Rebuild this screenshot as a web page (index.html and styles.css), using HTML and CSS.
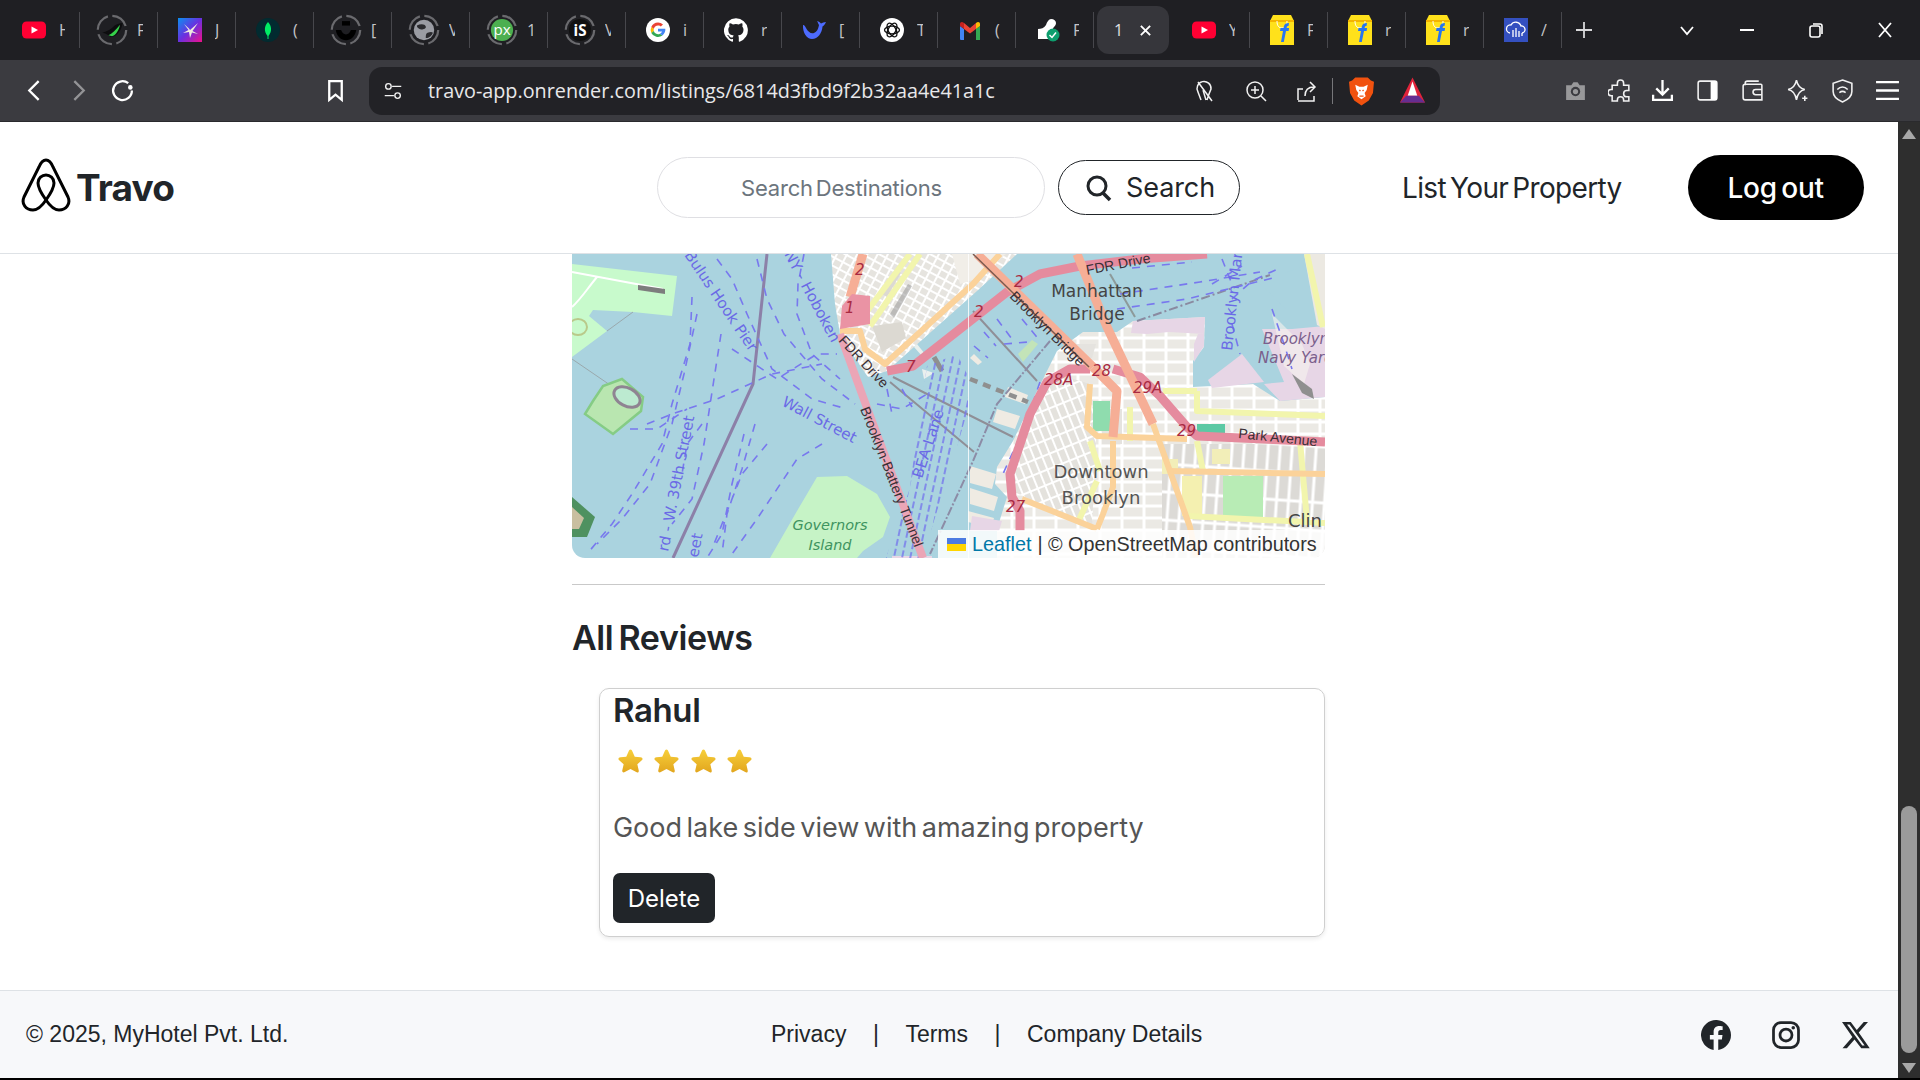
FILE: index.html
```html
<!DOCTYPE html>
<html lang="en">
<head>
  <meta charset="UTF-8">
  <title>Travo</title>
  <link rel="stylesheet" href="styles.css">
</head>
<body>

<svg class="defs" width="0" height="0">
  <defs>
    <symbol id="yt" viewBox="0 0 24 24"><rect x="0" y="3.500" width="24" height="17" rx="4.500" fill="#ff0033"/><path d="M9.500 8.500l6.500 3.500-6.500 3.500z" fill="#fff"/></symbol>
    <symbol id="fk" viewBox="0 0 24 30"><path d="M3 0h18l3 6v24H0V6z" fill="#ffe11b"/><path d="M0 5h24v2H0z" fill="#f4b400"/><path d="M7 6c0 5 2 7 5 7s5-2 5-7" fill="none" stroke="#fff" stroke-width="1"/><path d="M11 27l2-11h-3l.5-3h3l.5-2c.5-2 2-3 5-3l-.5 3c-1 0-1.500.4-1.700 1l-.2 1h2.500l-.5 3h-2.600l-2.200 11z" fill="#2874f0"/></symbol>
    <symbol id="ring" viewBox="0 0 36 36"><circle cx="18" cy="18" r="16" fill="none" stroke="#6a6a6e" stroke-width="2.500" stroke-dasharray="20 5.100"/></symbol>
    <linearGradient id="starfill" x1="0" y1="0" x2="0" y2="1"><stop offset="0" stop-color="#f7cf3a"/><stop offset="1" stop-color="#e2a61e"/></linearGradient>
    <symbol id="star" viewBox="0 0 28 28"><path d="M14 1.500c1 0 1.500.8 2 2l2.400 5.600 6.100.6c2 .2 2.600 1.800 1.200 3.100l-4.600 4.100 1.400 6.200c.4 1.900-1 2.800-2.600 1.900L14 21.800 8.100 25c-1.600.9-3-.100-2.600-1.900l1.400-6.200-4.600-4.100c-1.400-1.300-.8-2.900 1.200-3.100l6.100-.6L12 3.500c.5-1.200 1-2 2-2z" fill="url(#starfill)"/></symbol>
  </defs>
</svg>

<div class="page">

  <div class="tabs">
    <div class="tab"><svg class="fav" viewBox="0 0 24 24"><use href="#yt"/></svg><span>H</span></div>
    <div class="tab"><svg class="fav ringed" viewBox="0 0 36 36"><use href="#ring"/><path d="M7 21c6-1 10-4 14-8 3-2 6-3 9-3-1 7-6 15-13 16-2-2-5-4-10-5z" fill="#0d0d0f"/><path d="M14 24c4-2 8-6 13-12-1 6-5 12-9 13z" fill="#35d04a"/></svg><span>F</span></div>
    <div class="tab"><svg class="fav" viewBox="0 0 24 24"><defs><linearGradient id="gj" x1="0" y1="0" x2="1" y2="1"><stop offset="0" stop-color="#0a90f0"/><stop offset=".5" stop-color="#6a30e0"/><stop offset="1" stop-color="#f0108a"/></linearGradient></defs><rect width="24" height="24" fill="url(#gj)"/><path d="M12 12L20 5l-5.500 8 5.500 3-6-1.500-2 5.500-1-6-6 1 5.500-3L6 6l5 4.500z" fill="#efeadf"/></svg><span>J</span></div>
    <div class="tab"><svg class="fav" viewBox="0 0 24 24"><circle cx="12" cy="12" r="12" fill="#022b30"/><path d="M12 4c3.500 3.500 4.500 9 .5 14v3h-1v-3c-4-5-3-10.500.5-14z" fill="#00ed64"/></svg><span>(</span></div>
    <div class="tab"><svg class="fav ringed" viewBox="0 0 36 36"><use href="#ring"/><rect x="13.500" y="8" width="9" height="5" fill="#000"/><path d="M6.500 18h6c1 3 3 5 5.500 5s4.500-2 5.500-5h6c-1 7-6 11.500-11.500 11.500S7.500 25 6.500 18z" fill="#000"/></svg><span>[</span></div>
    <div class="tab"><svg class="fav ringed" viewBox="0 0 36 36"><use href="#ring"/><circle cx="18" cy="18" r="11.500" fill="#9a9ca3"/><path d="M10 13c4-2 9-2 10 1s-5 4-7 3-3-2-3-4zM22 21c3-1 5-1 6 0-1 3-4 6-8 6 0-3 0-5 2-6z" fill="#2b2b2f"/></svg><span>V</span></div>
    <div class="tab"><svg class="fav ringed" viewBox="0 0 36 36"><use href="#ring"/><circle cx="18" cy="18" r="12.500" fill="#4caf50"/><text class="favtext" x="18" y="24" text-anchor="middle" font-size="17" fill="#fff">px</text></svg><span>1</span></div>
    <div class="tab"><svg class="fav ringed" viewBox="0 0 36 36"><use href="#ring"/><circle cx="18" cy="18" r="12.500" fill="#111"/><text class="favtext" x="18" y="24.500" text-anchor="middle" font-size="17" font-weight="700" fill="#fff">iS</text></svg><span>V</span></div>
    <div class="tab"><svg class="fav" viewBox="0 0 24 24"><circle cx="12" cy="12" r="12" fill="#fff"/><path d="M12 4.500a7.500 7.500 0 0 1 5 1.900l-2.200 2.100A4.300 4.300 0 0 0 7.800 11L5.300 9A7.500 7.500 0 0 1 12 4.500z" fill="#ea4335"/><path d="M5.300 9l2.500 2a4.300 4.300 0 0 0 0 2l-2.500 2a7.500 7.500 0 0 1 0-6z" fill="#fbbc05"/><path d="M5.300 15l2.500-2a4.300 4.300 0 0 0 6.200 2.700l2.400 1.900A7.500 7.500 0 0 1 5.300 15z" fill="#34a853"/><path d="M19.300 10.800H12v2.700h4.100a3.500 3.500 0 0 1-2.100 2.200l2.400 1.900c2.200-2 3.300-4.500 2.900-6.800z" fill="#4285f4"/></svg><span>i</span></div>
    <div class="tab"><svg class="fav" viewBox="0 0 24 24"><path fill="#fff" d="M12 .3a12 12 0 0 0-3.800 23.400c.6.100.8-.3.8-.6v-2c-3.300.7-4-1.600-4-1.600-.600-1.400-1.400-1.800-1.400-1.800-1-.7.100-.7.100-.7 1.200.1 1.800 1.200 1.800 1.200 1 1.800 2.800 1.300 3.500 1 .1-.8.400-1.300.8-1.600-2.700-.3-5.500-1.300-5.500-6 0-1.200.5-2.300 1.200-3.100-.1-.3-.5-1.500.1-3.200 0 0 1-.3 3.300 1.200a11.500 11.500 0 0 1 6 0c2.300-1.500 3.300-1.200 3.300-1.200.6 1.700.2 2.900.1 3.200.8.800 1.200 1.900 1.200 3.100 0 4.600-2.800 5.700-5.500 6 .4.400.8 1.100.8 2.200v3.300c0 .3.200.7.800.6A12 12 0 0 0 12 .3z"/></svg><span>r</span></div>
    <div class="tab"><svg class="fav" viewBox="0 0 24 24"><path fill="#4d6bfe" d="M1 7c1-.3 2 1 3 3 2 4 5 6 8 5 2.500-1 4-3 5-8-1-1-1-3-2-4 2 .5 3 1.500 4 2.500 1.500-.5 3-1.500 5-1.500-1 2-2 3.500-3.500 4.500C20 15 16 21 10 21 5 21 .5 15 1 7z"/><circle cx="8" cy="10" r="1.200" fill="#1f1f23"/></svg><span>[</span></div>
    <div class="tab"><svg class="fav" viewBox="0 0 24 24"><circle cx="12" cy="12" r="12" fill="#fff"/><g fill="none" stroke="#111" stroke-width="1.300"><ellipse cx="12" cy="12" rx="7.500" ry="3.800"/><ellipse cx="12" cy="12" rx="7.500" ry="3.800" transform="rotate(60 12 12)"/><ellipse cx="12" cy="12" rx="7.500" ry="3.800" transform="rotate(120 12 12)"/></g></svg><span>T</span></div>
    <div class="tab"><svg class="fav" viewBox="0 0 24 20"><path d="M2 20V6l4 3v11H3a1 1 0 0 1-1-1z" fill="#4285f4"/><path d="M18 20V9l4-3v14z" fill="#34a853"/><path d="M6 9V3l6 5 6-5v6l-6 4.500z" fill="#ea4335"/><path d="M2 6V4c0-2 2-3 4-1v6z" fill="#c5221f"/><path d="M18 3c2-2 4-1 4 1v2l-4 3z" fill="#fbbc05"/></svg><span>(</span></div>
    <div class="tab"><svg class="fav" viewBox="0 0 24 24"><path d="M15 1c3 0 5 2 5 4 0 3-3 4-3 6v2c-3 0-3 4-1 8H2V11c3 0 6-1 8-4 1-3 3-6 5-6z" fill="#fff"/><circle cx="17" cy="17" r="6.500" fill="#0e9e6e"/><path d="M13.500 17l2.500 2.500 4-5" fill="none" stroke="#fff" stroke-width="1.500"/></svg><span>F</span></div>
    <div class="tab active"><span class="activename">1</span><svg class="closex" viewBox="0 0 14 14"><path d="M2 2l10 10M12 2L2 12" stroke="#fff" stroke-width="2"/></svg></div>
    <div class="tab"><svg class="fav" viewBox="0 0 24 24"><use href="#yt"/></svg><span>Y</span></div>
    <div class="tab"><svg class="fav tall" viewBox="0 0 24 30"><use href="#fk"/></svg><span>F</span></div>
    <div class="tab"><svg class="fav tall" viewBox="0 0 24 30"><use href="#fk"/></svg><span>r</span></div>
    <div class="tab"><svg class="fav tall" viewBox="0 0 24 30"><use href="#fk"/></svg><span>r</span></div>
    <div class="tab"><svg class="fav" viewBox="0 0 24 24"><rect width="24" height="24" fill="#3450c0"/><path d="M6 15a4 4 0 0 1 1-8 5.500 5.500 0 0 1 10 1 3.500 3.500 0 0 1 1 7" fill="none" stroke="#fff" stroke-width="1.300"/><path d="M9 12v7M12 10v9M15 13v6M18 15v3" stroke="#fff" stroke-width="1.300"/></svg><span>/</span></div>
    <svg class="newtab" viewBox="0 0 18 18"><path d="M9 1v16M1 9h16" stroke="#d8d8da" stroke-width="1.800"/></svg>
    <div class="wincontrols">
      <svg viewBox="0 0 16 16"><path d="M2 5l6 7 6-7" fill="none" stroke="#fff" stroke-width="1.800"/></svg>
      <svg class="win-min" viewBox="0 0 16 16"><path d="M1 8h14" stroke="#fff" stroke-width="2"/></svg>
      <svg viewBox="0 0 16 16"><rect x="2" y="4" width="10" height="11" rx="2" fill="none" stroke="#fff" stroke-width="1.600"/><path d="M5 2h7a2 2 0 0 1 2 2v8" fill="none" stroke="#fff" stroke-width="1.600"/></svg>
      <svg viewBox="0 0 16 16"><path d="M2 1l12 14M14 1L2 15" stroke="#fff" stroke-width="1.800"/></svg>
    </div>
  </div>

  <div class="toolbar">
    <div class="tool nav"><svg viewBox="0 0 24 24"><path d="M16 3L7 12l9 9" class="ln"/></svg></div>
    <div class="tool nav dim"><svg viewBox="0 0 24 24"><path d="M8 3l9 9-9 9" class="ln"/></svg></div>
    <div class="tool nav"><svg viewBox="0 0 24 24"><path d="M17.500 5A9 9 0 1 0 21 12" class="ln"/><circle cx="19.500" cy="9" r="2.200" fill="#fff"/></svg></div>
    <div class="tool bookmark"><svg viewBox="0 0 24 24"><path d="M6 3h12v18l-6-5-6 5z" class="ln"/></svg></div>
    <div class="urlbar">
      <svg class="urlicon" viewBox="0 0 24 24"><circle cx="7" cy="7" r="3" class="thin"/><path d="M11 7h10M3 17h10" class="thin"/><circle cx="17" cy="17" r="3" class="thin"/></svg>
      <div class="url">travo-app.onrender.com/listings/6814d3fbd9f2b32aa4e41a1c</div>
      <svg class="urlicon big" viewBox="0 0 24 24"><path d="M8 21l-3-8a7 7 0 1 1 13-3l-2 5-2 6M5 3l14 19M10 11l3 10" class="thin"/></svg>
      <svg class="urlicon big" viewBox="0 0 24 24"><circle cx="11" cy="11" r="8" class="thin"/><path d="M17 17l5 5M11 7v8M7 11h8" class="thin"/></svg>
      <svg class="urlicon big" viewBox="0 0 24 24"><path d="M3 21V10h5M3 22h16v-5M10 17c0-6 3-9 9-9M15 3l5 5-5 5" class="thin"/></svg>
      <i class="urlsep"></i>
      <svg class="brandicon" viewBox="0 0 24 28"><path d="M6 1h12l3 3 3 1-1 11-4 7-7 5-7-5-4-7L0 5l3-1z" fill="#f1520f"/><path d="M6 8l4 2h4l4-2-1 5-2 3 1 3-4 3-4-3 1-3-2-3z" fill="#fff"/><path d="M10 13l1 1M14 13l-1 1M10 19h4" stroke="#f1520f" stroke-width="1.200"/></svg>
      <svg class="brandicon bat" viewBox="0 0 26 28"><path d="M13 0l13 26H0z" fill="#e2233a"/><path d="M13 4l5 15H8z" fill="#fff"/><path d="M0 26l6.500-7h13l6.500 7z" fill="#662d91"/></svg>
    </div>
    <div class="tool camera"><svg viewBox="0 0 24 24"><path d="M3 7h5l2-3h4l2 3h5v14H3z" fill="#98989a"/><circle cx="12" cy="13" r="4.500" fill="#3b3b40"/><circle cx="12" cy="13" r="2.500" fill="#98989a"/></svg></div>
    <div class="tool"><svg viewBox="0 0 24 24"><path d="M9 7V5a3 3 0 0 1 6 0v2h5v5h-2a3 3 0 0 0 0 6h2v4h-5v-1a3 3 0 0 0-6 0v1H4v-5H3a3 3 0 0 1 0-6h1V7z" class="thin"/></svg></div>
    <div class="tool download"><svg viewBox="0 0 24 24"><path d="M12 2v14M6 10l6 6 6-6" class="ln"/><path d="M3 16v5h18v-5" class="ln"/></svg></div>
    <div class="tool"><svg viewBox="0 0 24 24"><rect x="3" y="3" width="18" height="18" rx="2" class="thin"/><path d="M15 3h6v18h-6z" fill="#fff"/></svg></div>
    <div class="tool"><svg viewBox="0 0 24 24"><path d="M5 7V5a2 2 0 0 1 2-2h11M3 8a2 2 0 0 1 2-2h15a1 1 0 0 1 1 1v14H5a2 2 0 0 1-2-2z" class="thin"/><path d="M21 11h-6a2 2 0 0 0 0 5h6" class="thin"/></svg></div>
    <div class="tool"><svg viewBox="0 0 24 24"><path d="M11 2c1 5 3 8 8 9-5 1-7 4-8 10-1-6-3-9-8-10 5-1 7-4 8-9z" class="thin"/><path d="M19 17v5M16.500 19.500h5" class="thin"/></svg></div>
    <div class="tool"><svg viewBox="0 0 24 24"><path d="M12 2l9 3v8c0 5-4 8-9 10-5-2-9-5-9-10V5z" class="thin"/><path d="M7 11c3-3 7-3 10 0M9 14c2-1.500 4-1.500 6 0M12 17h.1" class="thin"/></svg></div>
    <div class="tool"><svg viewBox="0 0 24 24"><path d="M1 4h22M1 12h22M1 20h22" class="ln"/></svg></div>
  </div>

  <div class="viewport">
    <div class="site">
      <nav class="navbar">
        <a class="brand">
          <svg class="logo" viewBox="0 0 50 54"><path d="M25 2c-3 0-5 2-7 7L3 39c-3 7 2 13 9 13 5 0 9-4 13-10 4 6 8 10 13 10 7 0 12-6 9-13L32 9c-2-5-4-7-7-7z" fill="none" stroke="#000" stroke-width="3"/><path d="M25 42c-5-7-8-12-8-17 0-5 4-8 8-8s8 3 8 8c0 5-3 10-8 17z" fill="none" stroke="#000" stroke-width="3"/></svg>
          <span class="brandname">Travo</span>
        </a>
        <form class="searchform">
          <div class="searchinput">Search Destinations</div>
          <div class="searchbtn">
            <svg viewBox="0 0 28 28"><circle cx="12" cy="12" r="9" fill="none" stroke="#212529" stroke-width="3"/><path d="M18 19l7 7" stroke="#212529" stroke-width="3.500"/></svg>
            Search
          </div>
        </form>
        <a class="listprop">List Your Property</a>
        <a class="logout">Log out</a>
      </nav>

      <main class="content">
        <div class="map">
          <svg class="mapsvg" viewBox="0 0 753 304" width="753" height="304">
            <defs>
              <pattern id="blocks" width="9" height="8" patternUnits="userSpaceOnUse" patternTransform="rotate(28)"><rect width="9" height="8" fill="#fff"/><rect x="1" y="1" width="7" height="6" fill="#e6e4df"/></pattern>
              <pattern id="blocks2" width="8" height="14" patternUnits="userSpaceOnUse" patternTransform="rotate(-22)"><rect width="8" height="14" fill="#fff"/><rect x="1" y="1" width="6" height="12" fill="#e4e2dd"/></pattern>
              <pattern id="blocks3" width="22" height="12" patternUnits="userSpaceOnUse"><rect width="22" height="12" fill="#fff"/><rect x="1.500" y="1.500" width="19" height="9" fill="#ebe9e4"/></pattern>
              <pattern id="blocks4" width="12" height="28" patternUnits="userSpaceOnUse" patternTransform="rotate(4)"><rect width="12" height="28" fill="#fff"/><rect x="1.500" y="1.500" width="9" height="25" fill="#dcdad6"/></pattern>
              <pattern id="hatch" width="8" height="10" patternUnits="userSpaceOnUse" patternTransform="rotate(12)"><path d="M2 1v7" stroke="#7474ec" stroke-width="1.500"/></pattern>
              <filter id="soft"><feGaussianBlur stdDeviation=".55"/></filter>
            </defs>
            <g filter="url(#soft)">
              <rect width="753" height="304" fill="#aad3df"/>
              <!-- left side: islands -->
              <path d="M0 10l105 12-5 40-39-4-40-2-4 6 18 15L0 103z" fill="#c8facc"/>
              <path d="M0 18l91 17M25 23c-10 12-16 22-25 30" stroke="#fff" stroke-width="2" fill="none"/>
              <path d="M66 31l27 4v5l-27-4z" fill="#7d7d7d"/>
              <ellipse cx="6" cy="73" rx="9" ry="8" fill="none" stroke="#b9c98a" stroke-width="2"/>
              <path d="M0 105l41 28M61 58L35 77" stroke="#9aa9ad" stroke-width="1" fill="none"/>
              <path d="M50 125l21 18-2 14-28 23-28-20 8-13 10-15z" fill="#b9e6b0" stroke="#85cc85" stroke-width="2.500"/>
              <ellipse cx="55" cy="143" rx="14" ry="9" transform="rotate(28 55 143)" fill="#bcead0" stroke="#8f8492" stroke-width="3"/>
              <path d="M0 243l23 20-8 20H0z" fill="#4f9160"/>
              <path d="M0 253l12 11-5 11H0z" fill="#c9bfa0"/>
              <path d="M198 304l27-47 20-34 30-1 30 18 13 23-7 20-20 14-6 7z" fill="#c6f3c6"/>

              <!-- manhattan -->
              <path d="M259 0l4 50 5 30 2 5 26 38 19-6 90-80 40-37z" fill="url(#blocks)"/>
              <path d="M310 40l14-25 5 4-14 24zM300 72l30-4 4 16-24 14z" fill="#dcd9d2"/>
              <path d="M318 60l18-30 4 2-18 32z" fill="#9f9f9f" opacity=".6"/>
              <path d="M380 0h54l-30 25-16 5z" fill="#f1eee8"/>

              <!-- brooklyn -->
              <path d="M485 97l26-19h34l16-11 72-4-1 30-11 14v26l60-3 27 17 45-4v161H425v-29l10-32-12-13 2-17 16-26 24-50z" fill="url(#blocks3)"/>
              <path d="M485 120l33 10 6 56-4 88-82-38 10-50 25-50z" fill="url(#blocks2)"/>
              <path d="M590 190h163v114H590z" fill="url(#blocks4)"/>
              <path d="M561 67l72-4-1 17-35-2-22 2-16-1z" fill="#e7d6e6"/>
              <path d="M622 108l10-16v-12l-6 0-4 10z" fill="#e7d6e6"/>
              <path d="M636 126l34-26 22 28-52 6z" fill="#e7d6e6"/>
              <path d="M690 75l30 0 33-3v71l-45 4-16-17 20-2z" fill="#e7d6e6"/>
              <path d="M686 28l31 30 36 12V20l-20-8z" fill="#aad3df"/>
              <path d="M732 0h21v75l-8-4z" fill="#ece9e2"/>
              <path d="M502 90h22l-4 14h-22zM530 155h20v35h-20z" fill="#e5e3df"/>
              <path d="M521 147h17v30h-17z" fill="#8fdcae"/>
              <path d="M625 170h28v12h-28z" fill="#5cc9a4"/>
              <path d="M651 222h40v45h-40z" fill="#b8ecb5"/>
              <path d="M610 222h20v40h-20z" fill="#f4f0b0"/>
              <path d="M640 195h18v15h-18zM590 205h16v15h-16z" fill="#f2eeb8"/>
              <path d="M700 60l30 30 8 20-6 20-20-18z" fill="#f6f3ee" opacity=".6"/>
              <path d="M720 120l20 15 2 10-12-6z" fill="#8f8f8f"/>

              <!-- piers -->
              <path d="M436 133l20 8-3 9-20-7zM425 155l23 7-5 13-22-7zM398 212l26 8-4 15-22-6zM398 234l28 9-4 14-24-7zM396 257l26 7-3 10-23-6z" fill="#efebe3"/>
              <path d="M400 262l30 5-3 10H398z" fill="#e7d6e6"/>
              <path d="M402 100l8 8-4 3-8-7z" fill="#efebe3"/>
              <path d="M350 115l12 4-10 6zM345 90l8 10-3 2-8-9z" fill="#e9f0ee"/>
              <path d="M446 100l14-14 6 4-15 18z" fill="#c3e4b8"/>
              <rect x="320" y="302" width="40" height="2" fill="#e7d6e6"/>

              <!-- rail and subway -->
              <path d="M195 0l-14 130L101 304" stroke="#8c80a8" stroke-width="3" fill="none"/>
              <path d="M321 123l120 60M318 128l84 70" stroke="#8f8f97" stroke-width="2" fill="none"/>
              <path d="M401 57l64 70" stroke="#8f8f97" stroke-width="2" fill="none"/>
              <path d="M478 87l-53 63-24 57-43 93" stroke="#8c8ca6" stroke-width="2" stroke-dasharray="9 2 2 2" fill="none"/>
              <path d="M398 125l58 23" stroke="#8f8f8f" stroke-width="4.500" stroke-dasharray="8 6" fill="none"/>
              <path d="M362 103l8 14" stroke="#8f8f8f" stroke-width="5" fill="none"/>
              <path d="M565 67l133-46" stroke="#8a8aa0" stroke-width="2" stroke-dasharray="9 3 2 3" fill="none"/>
              <path d="M538 20l25 43" stroke="#8d9a9a" stroke-width="2" fill="none"/>

              <!-- ferry lines -->
              <path d="M355 112l30-12 11 22v34l-24 79-22 70-36-1 24-70 6-50z" fill="url(#hatch)"/>
              <g class="ferry">
                <path d="M120 43l-2 47-18 60-10 40-30 50-20 30-25 30"/>
                <path d="M125 60l-13 60-12 50-22 60-28 35-25 25"/>
                <path d="M149 80l-7 45-10 65-12 55-20 25"/>
                <path d="M172 180l-12 50-10 50-15 24M183 170l-13 45-15 45-5 40M195 190l-25 30-30 75"/>
                <path d="M250 190l-25 15-40 60-25 35"/>
                <path d="M145 5l15 20 15 35 25 55 40 30 35 10"/>
                <path d="M185 5l10 40 17 35 38 45 33 25"/>
                <path d="M232 0l-6 30-1 30 15 40 28 25"/>
                <path d="M160 95l45 30 40-25 20 0"/>
                <path d="M75 170l25-10 45-15 55-25 50-10"/>
                <path d="M58 175l27 0 30-20M130 170l-15 20-5 30"/>
                <path d="M305 150l25 5 25-15M315 135l5 25M330 135l10 18"/>
                <path d="M412 78l12 14M402 92l14 12M425 65l15 20M450 65l18 22M432 90l25-2"/>
                <path d="M548 40l80-12 60-10M545 55l70-10 90-22M560 14l60-6M640 30l30-18M660 45l20-18 30-14"/>
                <path d="M650 5l10 25M700 55l12 35 8 25M660 70l8 30"/>
                <path d="M468 128l-16 46-22 48" stroke-dasharray="2 3"/>
              </g>

              <!-- roads -->
              <path d="M348 0l-50 72M338 0l-48 64" class="rd yellow"/>
              <path d="M625 137v20l128 5M591 137h34M625 187l6 30M558 153v34M616 262l137 7M728 187l7 80M735 0l16 73M518 187l10 30M505 270l20-43" class="rd yellow"/>
              <path d="M268 77h20l5 18 20 15 88-80 27-30" class="rd orange"/>
              <path d="M291 0l-13 43" class="rd salmon thick"/>
              <path d="M270 52l10-12 18 2v28l-30 5z" fill="#ea93a4"/>
              <path d="M268 80l23 63 60 161" class="rd pinklight"/>
              <path d="M315 117l26-5 94-74 33-18 40-8 60-7 67-5" class="rd pink thick"/>
              <path d="M518 115h-20l-23 13-17 32-20 60 2 23 8 14v20" class="rd pink thick"/>
              <path d="M541 115l27 8 20 19 27 31 10 9 128 6" class="rd pink thick"/>
              <path d="M518 130l-3 43 10 9 90 3M596 217l157 3M541 187v46l-10 27-6 15M450 245l75 30" class="rd orange"/>
              <path d="M521 113l24 24-4 46" class="rd salmon thick"/>
              <path d="M405 0l116 113" class="rd salmon thick"/>
              <path d="M401 0l116 113" class="edge"/>
              <path d="M505 0l30 73 46 97" class="rd salmon thick"/>
              <path d="M581 170l37 103 6 30" class="rd orange"/>
            </g>
            <line class="seam" x1="396.500" y1="0" x2="396.500" y2="304"/>
            <g class="lbl-place">
              <text x="525" y="43">Manhattan</text>
              <text x="525" y="66">Bridge</text>
              <text x="529" y="224" class="big">Downtown</text>
              <text x="529" y="250" class="big">Brooklyn</text>
              <text x="716" y="273" class="clin">Clin</text>
            </g>
            <g class="lbl-navy">
              <text x="691" y="90">Brooklyn</text>
              <text x="686" y="109">Navy Yard</text>
            </g>
            <g class="lbl-green">
              <text x="258" y="276">Governors</text>
              <text x="258" y="296">Island</text>
            </g>
            <g class="lbl-water">
              <text transform="translate(112 1) rotate(56)">Bulus Hook Pier</text>
              <text transform="translate(212 0) rotate(62)">NY - Hoboken</text>
              <text transform="translate(209 151) rotate(28)">Wall Street</text>
              <text transform="translate(96 298) rotate(-79)">rd - W. 39th Street</text>
              <text transform="translate(126 304) rotate(-79)">eet</text>
              <text transform="translate(350 225) rotate(-72)">BEA Lane</text>
              <text transform="translate(660 97) rotate(-84)">Brooklyn Mar</text>
            </g>
            <g class="lbl-road">
              <text transform="translate(515 21) rotate(-11)">FDR Drive</text>
              <text transform="translate(266 87) rotate(47)">FDR Drive</text>
              <text transform="translate(437 43) rotate(45)">Brooklyn Bridge</text>
              <text transform="translate(288 155) rotate(68.500)">Brooklyn-Battery Tunnel</text>
              <text transform="translate(666 184) rotate(6)">Park Avenue</text>
            </g>
            <g class="lbl-exit">
              <text x="283" y="21">2</text>
              <text x="273" y="59">1</text>
              <text x="402" y="63">2</text>
              <text x="442" y="33">2</text>
              <text x="334" y="118">7</text>
              <text x="472" y="131">28A</text>
              <text x="520" y="122">28</text>
              <text x="561" y="139">29A</text>
              <text x="605" y="182">29</text>
              <text x="434" y="258">27</text>
            </g>
          </svg>
          <div class="attrib">
            <span class="ukflag"></span>
            <a>Leaflet</a> <span>| © OpenStreetMap contributors</span>
          </div>
        </div>

        <hr class="divider">
        <h2 class="reviewhead">All Reviews</h2>

        <div class="card">
          <h3 class="reviewer">Rahul</h3>
          <div class="stars">
            <svg viewBox="0 0 28 28"><use href="#star"/></svg>
            <svg viewBox="0 0 28 28"><use href="#star"/></svg>
            <svg viewBox="0 0 28 28"><use href="#star"/></svg>
            <svg viewBox="0 0 28 28"><use href="#star"/></svg>
          </div>
          <p class="reviewtext">Good lake side view with amazing property</p>
          <button class="delbtn">Delete</button>
        </div>
      </main>

      <footer class="footer">
        <div class="copy">© 2025, MyHotel Pvt. Ltd.</div>
        <div class="links">
          <a>Privacy</a><span>|</span><a>Terms</a><span>|</span><a>Company Details</a>
        </div>
        <div class="social">
          <svg viewBox="0 0 24 24"><path fill="#212529" d="M24 12a12 12 0 1 0-13.900 11.900v-8.400H7.100V12h3V9.400c0-3 1.800-4.700 4.500-4.700 1.300 0 2.700.2 2.700.2v3h-1.500c-1.500 0-2 .9-2 1.900V12h3.400l-.5 3.500h-2.900v8.400A12 12 0 0 0 24 12z"/></svg>
          <svg viewBox="0 0 24 24"><rect x="2" y="2" width="20" height="20" rx="6" fill="none" stroke="#212529" stroke-width="2.200"/><circle cx="12" cy="12" r="4.800" fill="none" stroke="#212529" stroke-width="2.200"/><circle cx="17.800" cy="6.200" r="1.400" fill="#212529"/></svg>
          <svg viewBox="0 0 24 24"><path fill="#212529" d="M18.200 1.500h3.400l-7.400 8.500L23 22.500h-6.800l-5.400-7-6.100 7H1.200l7.900-9L.8 1.500h7l4.800 6.400zM17 20.400h1.900L6.800 3.500H4.800z"/></svg>
        </div>
      </footer>
    </div>

    <div class="scrollbar">
      <div class="arrow up"></div>
      <div class="track"><div class="thumb"></div></div>
      <div class="arrow down"></div>
    </div>
  </div>

  <div class="bottomline"></div>
</div>

</body>
</html>
```

FILE: styles.css
```css
* {
  box-sizing: border-box;
}
html, body {
  margin: 0;
  height: 100%;
  overflow: hidden;
}
body {
  font-family: Inter, "Noto Sans", sans-serif;
  color: #212529;
  background: #fff;
}
.defs {
  position: absolute;
}
.page {
  height: 1080px;
  display: flex;
  flex-direction: column;
}

/* browser chrome */
.tabs {
  height: 60px;
  background: #1f1f23;
  display: flex;
  align-items: center;
  padding-left: 2px;
  flex-shrink: 0;
}
.tab {
  width: 78px;
  height: 36px;
  display: flex;
  align-items: center;
  justify-content: flex-start;
  padding-left: 20px;
  border-right: 1px solid #47474c;
  color: #c4c4c7;
  font-family: "Open Sans", sans-serif;
  font-size: 16px;
  flex-shrink: 0;
}
.tab span {
  width: 6px;
  margin-left: 13px;
  overflow: hidden;
  white-space: nowrap;
}
.fav {
  width: 24px;
  height: 24px;
  flex-shrink: 0;
}
.fav.ringed {
  width: 32px;
  height: 32px;
  margin-left: -4px;
  margin-right: -4px;
}
.fav.tall {
  height: 30px;
}
.favtext {
  font-family: "Open Sans", sans-serif;
}
.tab.active {
  height: 48px;
  width: 72px;
  margin-left: 3px;
  margin-right: 3px;
  background: #36363b;
  border: none;
  border-radius: 12px;
  padding-left: 17px;
  color: #e0e0e2;
}
.tab .activename {
  width: 8px;
  margin-left: 0;
}
.closex {
  width: 13px;
  height: 13px;
  margin-left: 17px;
}
.newtab {
  width: 18px;
  height: 18px;
  margin-left: 13px;
  flex-shrink: 0;
}
.wincontrols {
  display: flex;
  align-items: center;
  gap: 53px;
  margin-left: auto;
  padding-right: 27px;
}
.wincontrols svg {
  width: 16px;
  height: 16px;
}
.wincontrols .win-min {
  margin-left: -9px;
}
.toolbar {
  height: 62px;
  background: #3b3b40;
  border-bottom: 1px solid #2a2a2d;
  display: flex;
  align-items: center;
  padding-left: 12px;
  flex-shrink: 0;
}
.tool {
  width: 45px;
  height: 44px;
  display: flex;
  align-items: center;
  justify-content: center;
  flex-shrink: 0;
}
.tool.nav {
  width: 44px;
}
.tool svg {
  width: 25px;
  height: 25px;
}
.tool.dim {
  opacity: .45;
}
.ln {
  fill: none;
  stroke: #fff;
  stroke-width: 2.200;
}
.thin {
  fill: none;
  stroke: #f2f2f2;
  stroke-width: 1.500;
}
.bookmark {
  margin-left: 169px;
}
.urlbar {
  width: 1071px;
  height: 48px;
  margin-left: 11px;
  background: #222226;
  border-radius: 13px;
  display: flex;
  align-items: center;
  padding-left: 13px;
  flex-shrink: 0;
}
.urlicon {
  width: 22px;
  height: 22px;
  flex-shrink: 0;
}
.url {
  width: 765px;
  margin-left: 24px;
  color: #e8e8ea;
  font-family: "Open Sans", sans-serif;
  font-size: 19.800px;
  white-space: nowrap;
}
.urlicon.big {
  width: 24px;
  height: 24px;
}
.urlicon.big + .urlicon.big {
  margin-left: 27px;
}
.urlsep {
  width: 1px;
  height: 26px;
  margin-left: 13px;
  background: #77777a;
}
.brandicon {
  width: 25px;
  height: 30px;
  margin-left: 16px;
}
.brandicon.bat {
  margin-left: 26px;
}
.camera {
  margin-left: 113px;
}
.download {
  margin-left: -3px;
}

/* page */
.viewport {
  flex: 1;
  display: flex;
  min-height: 0;
}
.site {
  flex: 1;
  display: flex;
  flex-direction: column;
  min-width: 0;
}
.navbar {
  height: 132px;
  border-bottom: 1px solid #dee2e6;
  display: flex;
  align-items: center;
  padding-left: 21px;
  flex-shrink: 0;
}
.brand {
  display: flex;
  align-items: center;
  width: 636px;
}
.logo {
  width: 50px;
  height: 54px;
  margin-bottom: 6px;
}
.brandname {
  margin-left: 5px;
  font-size: 37px;
  font-weight: 700;
  letter-spacing: -.8px;
}
.searchform {
  display: flex;
  align-items: center;
  gap: 13px;
}
.searchinput {
  width: 388px;
  height: 61px;
  border: 1px solid #dfdfe3;
  border-radius: 31px;
  display: flex;
  align-items: center;
  padding-left: 83px;
  font-size: 22px;
  letter-spacing: -.2px;
  word-spacing: -3px;
  color: #6c757d;
}
.searchbtn {
  width: 182px;
  height: 55px;
  border: 1px solid #212529;
  border-radius: 28px;
  display: flex;
  align-items: center;
  padding-left: 26px;
  gap: 13px;
  font-size: 27px;
  letter-spacing: -.1px;
}
.searchbtn svg {
  width: 28px;
  height: 28px;
}
.listprop {
  margin-left: 162px;
  font-size: 28px;
  font-weight: 400;
  letter-spacing: -.67px;
  word-spacing: -3px;
  white-space: nowrap;
}
.logout {
  margin-left: 66px;
  width: 176px;
  height: 65px;
  background: #000;
  color: #fff;
  border-radius: 33px;
  display: flex;
  align-items: center;
  justify-content: center;
  font-size: 28px;
  font-weight: 500;
  letter-spacing: -.2px;
  word-spacing: -3px;
}
.content {
  flex: 1;
  padding-left: 572px;
  width: 1325px;
  box-sizing: content-box;
  padding-right: 0;
}
.content > * {
  width: 753px;
}
.map {
  height: 304px;
  position: relative;
  overflow: hidden;
  border-radius: 0 0 13px 13px;
}
.mapsvg {
  display: block;
}
.seam {
  stroke: #fff;
  stroke-width: 1;
  opacity: .8;
}
.ferry path {
  fill: none;
  stroke: #7878ee;
  stroke-width: 1.600;
  stroke-dasharray: 8 7;
}
.rd {
  fill: none;
  stroke-width: 6;
  stroke-linejoin: round;
}
.rd.thick {
  stroke-width: 9;
}
.rd.pink {
  stroke: #e58b9e;
}
.rd.pinklight {
  stroke: #eba5b6;
  stroke-width: 8;
}
.rd.orange {
  stroke: #fbd29a;
}
.rd.salmon {
  stroke: #f6ae96;
}
.rd.yellow {
  stroke: #f2f5ad;
}
.edge {
  fill: none;
  stroke: #7a5a50;
  stroke-width: 1.500;
}
.lbl-place text {
  font-family: "DejaVu Sans", sans-serif;
  font-size: 17px;
  fill: #444;
  text-anchor: middle;
}
.lbl-place .big {
  font-size: 18px;
  fill: #555;
}
.lbl-place .clin {
  text-anchor: start;
  font-size: 18px;
}
.lbl-navy text {
  font-family: "DejaVu Sans", sans-serif;
  font-style: italic;
  font-size: 15px;
  fill: #7b5f8c;
}
.lbl-green text {
  font-family: "DejaVu Sans", sans-serif;
  font-style: italic;
  font-size: 14.500px;
  fill: #3f9460;
  text-anchor: middle;
}
.lbl-water text {
  font-family: "DejaVu Sans", sans-serif;
  font-size: 15px;
  fill: #6a6ae6;
}
.lbl-road text {
  font-family: "Liberation Sans", sans-serif;
  font-size: 14px;
  fill: #3a3036;
}
.lbl-exit text {
  font-family: "DejaVu Sans", sans-serif;
  font-style: italic;
  font-size: 15px;
  fill: #a92a42;
}
.attrib {
  position: absolute;
  right: 0;
  bottom: 0;
  width: 387px;
  height: 28px;
  padding-left: 9px;
  background: rgba(255, 255, 255, .85);
  display: flex;
  align-items: center;
  gap: 6px;
  font-family: "Liberation Sans", Arial, sans-serif;
  font-size: 19.800px;
  color: #333;
  white-space: nowrap;
}
.attrib a {
  color: #0078a8;
}
.ukflag {
  width: 19px;
  height: 13px;
  background: linear-gradient(#4c7be1 50%, #ffd500 50%);
  flex-shrink: 0;
}
.divider {
  margin: 26px 0 0;
  border: none;
  border-top: 1px solid #c9c9c9;
}
.reviewhead {
  margin: 33px 0 0;
  font-size: 34px;
  line-height: 40px;
  font-weight: 600;
  letter-spacing: -.4px;
  word-spacing: -3px;
}
.content .card {
  margin: 30px 0 0 27px;
  width: 726px;
  height: 249px;
  padding: 1px 13px 0;
  border: 1px solid #cfcfcf;
  border-radius: 10px;
  box-shadow: 0 2px 4px rgba(0, 0, 0, .08);
}
.reviewer {
  margin: 0;
  font-size: 33px;
  line-height: 40px;
  font-weight: 600;
  letter-spacing: -.4px;
}
.stars {
  display: flex;
  gap: 9.300px;
  margin: 18px 0 0 4px;
}
.stars svg {
  width: 27px;
  height: 27px;
}
.reviewtext {
  margin: 34px 0 0;
  font-size: 27px;
  line-height: 38px;
  color: #555;
  letter-spacing: -.02px;
  word-spacing: -3px;
  white-space: nowrap;
}
.delbtn {
  display: block;
  margin: 26px 0 0;
  width: 102px;
  height: 50px;
  background: #212529;
  color: #fff;
  border: none;
  border-radius: 7px;
  font-family: Inter, sans-serif;
  font-size: 24px;
  letter-spacing: 0;
  padding: 0;
}
.footer {
  height: 88px;
  border-top: 1px solid #dee2e6;
  background: #f7f8fa;
  display: flex;
  align-items: center;
  padding: 0 27px 0 26px;
  font-family: "Liberation Sans", Arial, sans-serif;
  font-size: 23px;
  flex-shrink: 0;
}
.copy {
  width: 745px;
  white-space: nowrap;
}
.links {
  display: flex;
  gap: 26.500px;
  white-space: nowrap;
}
.social {
  margin-left: auto;
  display: flex;
  gap: 40px;
  align-items: center;
}
.social svg {
  width: 30px;
  height: 30px;
}
.scrollbar {
  width: 22px;
  background: #2e2e2e;
  display: flex;
  flex-direction: column;
  align-items: center;
  flex-shrink: 0;
}
.arrow {
  width: 0;
  height: 0;
  border-left: 7px solid transparent;
  border-right: 7px solid transparent;
}
.arrow.up {
  margin-top: 7px;
  border-bottom: 10px solid #a8a8a8;
}
.arrow.down {
  margin-bottom: 5px;
  border-top: 10px solid #a8a8a8;
}
.track {
  flex: 1;
  width: 100%;
  padding: 667px 3px 0;
}
.thumb {
  height: 247px;
  background: #9b9b9b;
  border-radius: 8px;
}
.bottomline {
  height: 2px;
  background: #000;
  flex-shrink: 0;
}
```
